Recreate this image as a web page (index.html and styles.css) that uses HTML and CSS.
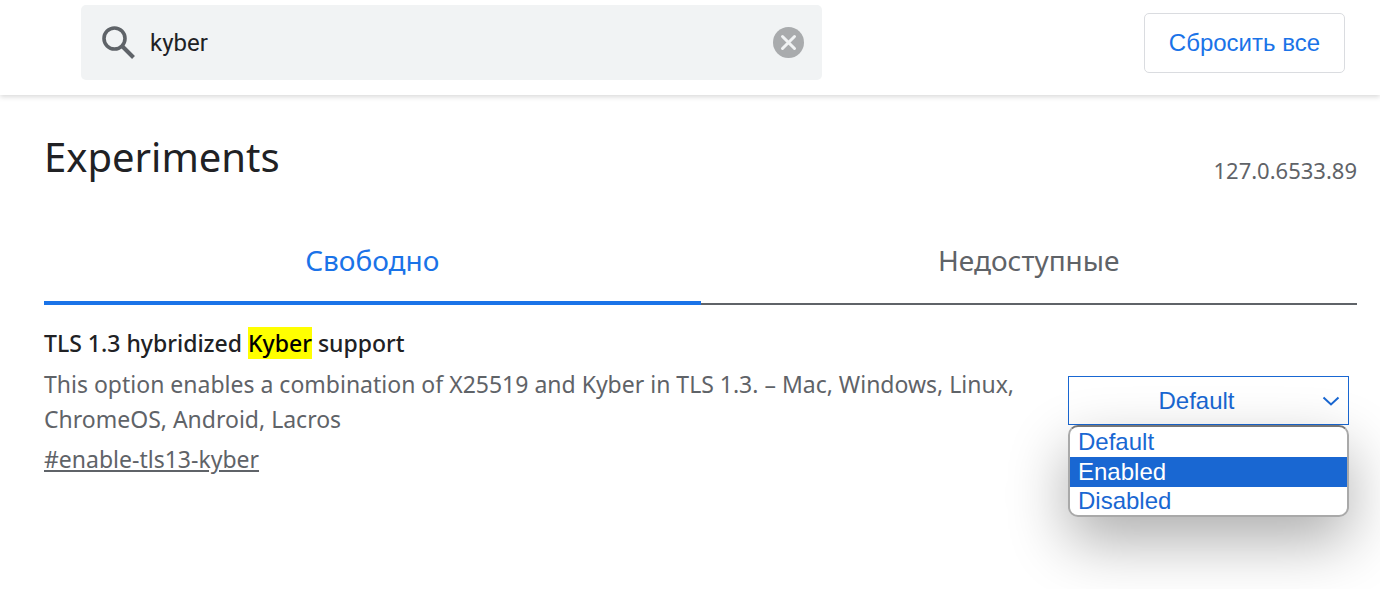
FILE: index.html
```html
<!DOCTYPE html>
<html lang="ru">
<head>
    <meta charset="UTF-8">
    <meta name="viewport" content="width=device-width, initial-scale=1.0">
    <title>Experiments</title>
    <link rel="stylesheet" href="styles.css">
</head>
<body>
    <header class="toolbar">
        <div class="search">
            <svg class="search-icon" viewBox="0 0 34 34" aria-hidden="true">
                <circle cx="12.500" cy="12.500" r="10.500" fill="none" stroke="#5f6368" stroke-width="3.600"/>
                <path d="M20 20L31.500 31.500" stroke="#5f6368" stroke-width="4"/>
            </svg>
            <input type="text" id="search" value="kyber" aria-label="Search flags">
            <button class="clear-search" type="button" aria-label="Clear search">
                <svg viewBox="0 0 31 31" aria-hidden="true">
                    <circle cx="15.500" cy="15.500" r="15.500" fill="#a9abad"/>
                    <path d="M9.500 9.500L21.500 21.500M21.500 9.500L9.500 21.500" stroke="#f1f3f4" stroke-width="3" stroke-linecap="round"/>
                </svg>
            </button>
        </div>
        <button class="reset-all" type="button">Сбросить все</button>
    </header>

    <main class="content">
        <div class="title-row">
            <h1>Experiments</h1>
            <span class="version">127.0.6533.89</span>
        </div>

        <div class="tabs" role="tablist">
            <button class="tab selected" type="button" role="tab" aria-selected="true">Свободно</button>
            <button class="tab" type="button" role="tab" aria-selected="false">Недоступные</button>
        </div>

        <div class="experiment">
            <div class="experiment-text">
                <h2>TLS 1.3 hybridized <mark>Kyber</mark> support</h2>
                <p>This option enables a combination of X25519 and Kyber in TLS 1.3. – Mac, Windows, Linux, ChromeOS, Android, Lacros</p>
                <a class="permalink" href="#enable-tls13-kyber">#enable-tls13-kyber</a>
            </div>
            <div class="experiment-actions">
                <select id="kyber-select" aria-label="TLS 1.3 hybridized Kyber support">
                    <option selected>Default</option>
                    <option>Enabled</option>
                    <option>Disabled</option>
                </select>
                <svg class="chevron" viewBox="0 0 18 10" aria-hidden="true">
                    <path d="M1.500 1.500L9 8.500L16.500 1.500" fill="none" stroke="#1967d2" stroke-width="2"/>
                </svg>
                <ul class="options" role="listbox" aria-label="Options">
                    <li role="option" aria-selected="false">Default</li>
                    <li class="active" role="option" aria-selected="true">Enabled</li>
                    <li role="option" aria-selected="false">Disabled</li>
                </ul>
            </div>
        </div>
    </main>
</body>
</html>
```
FILE: styles.css
```css
* {
    box-sizing: border-box;
}
body {
    min-height: 100vh;
    margin: 0;
    background: #fff;
    color: #202124;
    font-family: "Segoe UI", "Noto Sans", sans-serif;
    font-size: 23px;
}
button,
input,
select {
    font-family: Arial, "Liberation Sans", sans-serif;
    font-size: 24px;
}
.toolbar {
    display: flex;
    align-items: center;
    justify-content: space-between;
    gap: 40px;
    padding: 5px 35px 15px 81px;
    box-shadow: 0 2px 5px rgba(0, 0, 0, 0.15);
}
.search {
    display: flex;
    align-items: center;
    flex: 1;
    max-width: 741px;
    height: 75px;
    padding: 0 18px 0 21px;
    border-radius: 5px;
    background: #f1f3f4;
}
.search-icon {
    width: 34px;
    height: 34px;
}
.search input {
    flex: 1;
    min-width: 0;
    padding: 0 14px;
    border: 0;
    outline: 0;
    background: none;
    color: #202124;
    font-family: Roboto, sans-serif;
}
.clear-search {
    width: 31px;
    height: 31px;
    padding: 0;
    border: 0;
    background: none;
}
.clear-search svg {
    display: block;
}
.reset-all {
    height: 60px;
    padding: 0 24px;
    border: 1px solid #dadce0;
    border-radius: 5px;
    background: #fff;
    color: #1a73e8;
}
.content {
    padding: 32px 23px 40px 44px;
}
.title-row {
    display: flex;
    align-items: flex-end;
    justify-content: space-between;
}
h1 {
    margin: 0;
    font-size: 40px;
    font-weight: 400;
    line-height: 60px;
}
.version {
    color: #5f6368;
    font-size: 22px;
    line-height: 34px;
}
.tabs {
    display: grid;
    grid-template-columns: 1fr 1fr;
    margin-top: 32px;
}
.tab {
    height: 86px;
    padding: 0 0 2px;
    border: 0;
    border-bottom: 2px solid #5f6368;
    background: none;
    color: #5f6368;
    font-family: "Segoe UI", "Noto Sans", sans-serif;
    font-size: 28px;
}
.tab.selected {
    padding: 0;
    border-bottom: 4px solid #1a73e8;
    color: #1a73e8;
}
.experiment {
    display: flex;
    align-items: flex-start;
    justify-content: space-between;
    gap: 40px;
    padding: 20px 8px 0 0;
}
.experiment-text {
    flex: 1;
    color: #5f6368;
}
h2 {
    margin: 0 0 6px;
    color: #202124;
    font-size: 23px;
    font-weight: 500;
    line-height: 36px;
}
mark {
    background: #ff0;
    color: #000;
}
p {
    margin: 0;
    line-height: 35px;
}
.permalink {
    display: inline-block;
    margin-top: 5px;
    color: #5f6368;
    line-height: 35px;
}
.experiment-actions {
    position: relative;
    width: 281px;
    margin-top: 51px;
    color: #1967d2;
}
select {
    display: block;
    width: 100%;
    height: 49px;
    padding: 0 24px 0 0;
    border: 1px solid #1967d2;
    border-radius: 0;
    outline: 0;
    appearance: none;
    background: #fff;
    color: #1967d2;
    text-align: center;
    text-align-last: center;
}
.chevron {
    position: absolute;
    top: 20px;
    right: 9px;
    width: 18px;
    height: 10px;
}
.options {
    position: absolute;
    top: 49px;
    left: 0;
    width: 100%;
    margin: 0;
    padding: 0;
    overflow: hidden;
    border: 2px solid #a9a9a9;
    border-top-color: #777;
    border-radius: 10px;
    background: #fff;
    box-shadow: 0 24px 60px rgba(0, 0, 0, 0.32);
    font-family: Arial, "Liberation Sans", sans-serif;
    font-size: 24px;
    line-height: 30px;
    list-style: none;
}
.options li {
    padding: 0 8px;
}
.options li:last-child {
    line-height: 28px;
}
.options .active {
    background: #1967d2;
    color: #fff;
}
```
